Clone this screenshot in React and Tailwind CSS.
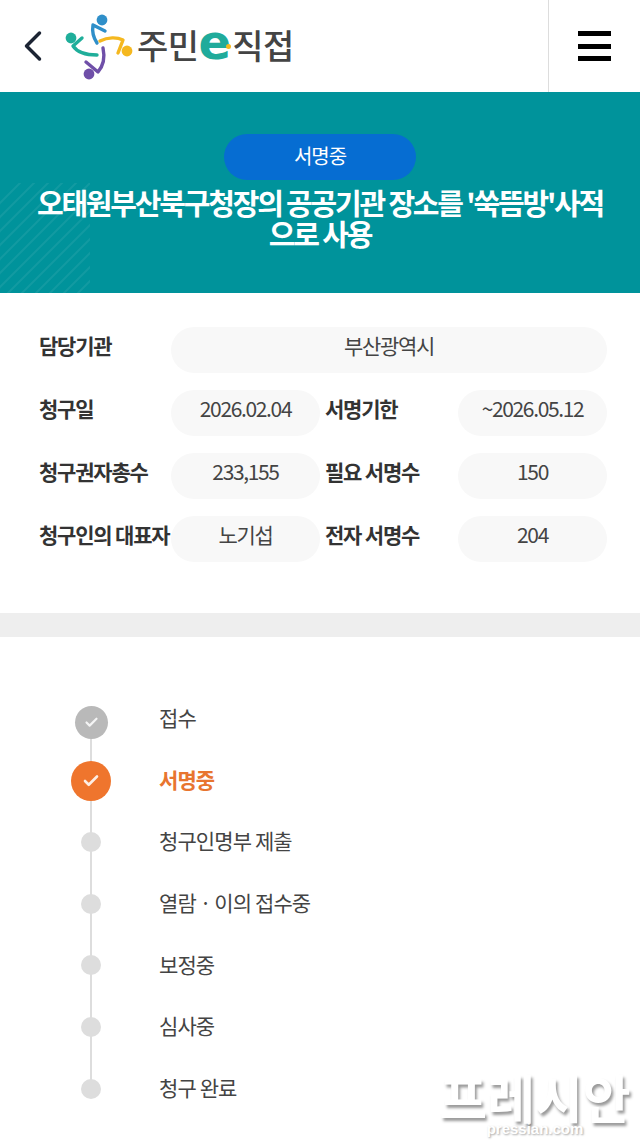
import React from 'react';
import { ChevronLeft, Check } from 'lucide-react';

const FONT = "font-['Noto_Sans_CJK_KR','Noto_Sans',sans-serif]";

const infoRows = [
  ['청구일', '2026.02.04', '서명기한', '~2026.05.12'],
  ['청구권자총수', '233,155', '필요 서명수', '150'],
  ['청구인의 대표자', '노기섭', '전자 서명수', '204'],
];

const steps = [
  { label: '접수', state: 'done' },
  { label: '서명중', state: 'active' },
  { label: '청구인명부 제출' },
  { label: '열람 · 이의 접수중' },
  { label: '보정중' },
  { label: '심사중' },
  { label: '청구 완료' },
];

function LogoMark() {
  return (
    <svg width="70" height="68" viewBox="65 14 70 68" fill="none" strokeLinecap="round" strokeLinejoin="round" strokeWidth="3.4">
      <circle cx="102" cy="20" r="5.4" fill="#2f8fc9" />
      <path d="M97 43C93 37 92 31 93 25L105 31" stroke="#2f8fc9" />
      <circle cx="71" cy="38" r="5.4" fill="#1fae9a" />
      <path d="M97 55C86 55 77 52 73 46L82 38" stroke="#1fae9a" />
      <circle cx="127" cy="51" r="5.4" fill="#f5b81f" />
      <path d="M100 41C108 37 117 37 123 40L118 53" stroke="#f5b81f" />
      <circle cx="89" cy="74" r="5.4" fill="#6f4fa8" />
      <path d="M103 48C105 57 103 66 98 72L86 62" stroke="#6f4fa8" />
    </svg>
  );
}

function Stripes() {
  const lines = [];
  for (let i = 0; i < 13; i++) {
    const c = 20 + i * 14;
    lines.push(<line key={i} x1={-10} y1={c + 10} x2={c + 10} y2={-10} />);
  }
  return (
    <svg className="absolute left-0 bottom-0" width="90" height="110" viewBox="0 0 90 110" stroke="#ffffff" strokeOpacity="0.07" strokeWidth="2">
      {lines}
    </svg>
  );
}

function Pill({ children, className = '' }) {
  return (
    <div className={`h-[46px] pb-[8px] rounded-full bg-[#f8f8f8] flex items-center justify-center text-[21px] tracking-[-1.35px] text-[#444] ${className}`}>
      {children}
    </div>
  );
}

function Label({ children, className = '' }) {
  return (
    <div className={`pb-[8px] flex items-center whitespace-nowrap text-[21px] font-bold tracking-[-1.2px] text-[#333] ${className}`}>
      {children}
    </div>
  );
}

function StepDot({ state }) {
  if (state === 'done') {
    return (
      <div className="relative z-10 mt-[10px] w-[33px] h-[33px] rounded-full bg-[#b9b9b9] flex items-center justify-center">
        <Check size={15} strokeWidth={3.5} className="text-[#f4f4f4]" />
      </div>
    );
  }
  if (state === 'active') {
    return (
      <div className="relative z-10 mt-[4px] w-[40px] h-[40px] rounded-full bg-[#ef752d] flex items-center justify-center">
        <Check size={18} strokeWidth={3.5} className="text-[#fdeee4]" />
      </div>
    );
  }
  return <div className="relative z-10 mt-[2px] w-[20px] h-[20px] rounded-full bg-[#dddddd]" />;
}

export default function App() {
  return (
    <div className={`relative w-[640px] min-h-[1145px] bg-white overflow-hidden ${FONT}`}>
      {/* Header */}
      <header className="h-[92px] flex items-center bg-white">
        <ChevronLeft size={52} strokeWidth={1.6} className="ml-[7px] text-[#1c2433]" />
        <div className="ml-[6px] mt-[4px]">
          <LogoMark />
        </div>
        <div className="ml-[2px] flex items-center text-[34px] font-medium leading-none tracking-[-0.5px] text-[#444] mb-[2px]">
          주민
          <span className="h-[34px] mb-[6px] text-[48px] font-bold font-['DejaVu_Sans',sans-serif] leading-[34px] tracking-normal text-[#20ab9b]">e</span>
          <span className="w-[5px] h-[5px] mr-[1px] -ml-[5px] mt-[3px] rounded-full bg-[#f5b81f]" />
          직접
        </div>
        <div className="ml-auto w-[92px] h-full border-l border-[#dddddd] flex flex-col items-center justify-center gap-[7.5px]">
          <span className="block w-[33px] h-[5px] bg-black" />
          <span className="block w-[33px] h-[5px] bg-black" />
          <span className="block w-[33px] h-[5px] bg-black" />
        </div>
      </header>

      {/* Title band */}
      <section className="relative h-[201px] bg-[#00939b] flex flex-col items-center pt-[42px]">
        <Stripes />
        <div className="w-[192px] h-[46px] pb-[2px] rounded-full bg-[#066dd2] flex items-center justify-center text-[20px] tracking-[-1px] text-white">
          서명중
        </div>
        <h1 className="relative mt-[7px] w-[570px] text-center text-[29px] font-bold leading-[31px] tracking-[-2.2px] text-white">
          오태원부산북구청장의 공공기관 장소를 '쑥뜸방'사적으로 사용
        </h1>
      </section>

      {/* Info grid */}
      <section className="h-[320px] px-[39px] pt-[34px]">
        <div className="grid grid-cols-[132px_149px_138px_149px] gap-y-[17px]">
          <Label>담당기관</Label>
          <Pill className="col-span-3">부산광역시</Pill>
          {infoRows.map((row) => (
            <React.Fragment key={row[0]}>
              <Label>{row[0]}</Label>
              <Pill>{row[1]}</Pill>
              <Label className="pl-[5px]">{row[2]}</Label>
              <Pill>{row[3]}</Pill>
            </React.Fragment>
          ))}
        </div>
      </section>

      <div className="h-[24px] bg-[#eeeeee]" />

      {/* Progress */}
      <section className="relative pt-[50px] pb-[25px]">
        <div className="absolute left-[90px] top-[85px] h-[367px] w-[2px] bg-[#dddddd]" />
        {steps.map((step) => (
          <div key={step.label} className="h-[61.67px] flex items-center">
            <div className="ml-[71px] w-[40px] flex justify-center">
              <StepDot state={step.state} />
            </div>
            <span
              className={`ml-[48px] text-[21px] tracking-[-0.9px] ${
                step.state === 'active' ? 'font-bold text-[#e8752f]' : 'text-[#444]'
              }`}
            >
              {step.label}
            </span>
          </div>
        ))}
      </section>

      {/* Watermark */}
      <div className="absolute right-[8px] bottom-[8px] w-[194px] flex flex-col items-center text-white">
        <span className="text-[52px] font-bold leading-[48px] whitespace-nowrap [text-shadow:2px_3px_3px_rgba(0,0,0,0.4)]">
          프레시안
        </span>
        <span className="text-[15px] font-bold leading-[16px] font-['Liberation_Sans',sans-serif] [text-shadow:1px_1px_2px_rgba(0,0,0,0.35)]">
          pressian.com
        </span>
      </div>
    </div>
  );
}
